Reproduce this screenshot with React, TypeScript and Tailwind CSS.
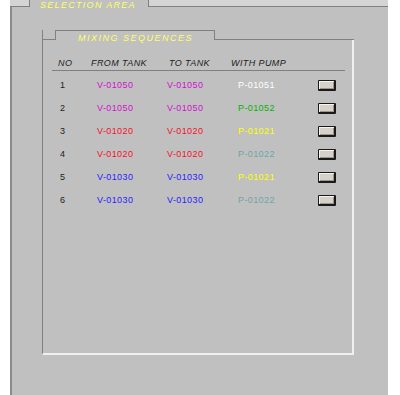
import React from "react";

const rows = [
  { no: "1", from: "V-01050", fromC: "text-[#d010d0]", to: "V-01050", toC: "text-[#d010d0]", pump: "P-01051", pumpC: "text-[#ffffff]" },
  { no: "2", from: "V-01050", fromC: "text-[#d010d0]", to: "V-01050", toC: "text-[#d010d0]", pump: "P-01052", pumpC: "text-[#00b400]" },
  { no: "3", from: "V-01020", fromC: "text-[#f4102c]", to: "V-01020", toC: "text-[#f4102c]", pump: "P-01021", pumpC: "text-[#ffff00]" },
  { no: "4", from: "V-01020", fromC: "text-[#f4102c]", to: "V-01020", toC: "text-[#f4102c]", pump: "P-01022", pumpC: "text-[#6ea6a6]" },
  { no: "5", from: "V-01030", fromC: "text-[#2a1cff]", to: "V-01030", toC: "text-[#2a1cff]", pump: "P-01021", pumpC: "text-[#ffff00]" },
  { no: "6", from: "V-01030", fromC: "text-[#2a1cff]", to: "V-01030", toC: "text-[#2a1cff]", pump: "P-01022", pumpC: "text-[#6ea6a6]" },
];

export default function App() {
  return (
    <div
      className="w-[400px] h-[395px] bg-white overflow-hidden"
      style={{ fontFamily: '"Liberation Sans", Arial, sans-serif' }}
    >
      <div className="ml-[10px] w-[378px] h-full bg-[#c0c0c0] flex flex-col">
        {/* top band with SELECTION AREA tab */}
        <div className="flex h-[7px] shrink-0">
          <div className="w-[19px] bg-[#d4d4d4] border-b border-[#808080]" />
          <div className="w-[120px] border-l border-r border-[#808080] bg-[#c0c0c0]">
            <div className="pl-[10px] pt-[1px] text-[9px] leading-[9px] italic tracking-[1.3px] text-[#ffff66] whitespace-nowrap">
              SELECTION AREA
            </div>
          </div>
          <div className="flex-1 bg-[#d4d4d4] border-b border-[#808080]" />
        </div>

        {/* outer frame body */}
        <div className="flex-1 border-l-2 border-[#8a8a8a] pl-[30px] pt-[23px]">
          <div className="w-[312px] flex flex-col">
            {/* inner tab row */}
            <div className="flex h-[10px]">
              <div className="w-[13px] border-l border-b border-[#808080]" />
              <div className="w-[160px] border-t border-l border-r border-[#808080]">
                <div className="pl-[22px] pt-[3px] text-[9px] leading-[9px] italic tracking-[1.5px] text-[#ffff66] whitespace-nowrap">
                  MIXING SEQUENCES
                </div>
              </div>
              <div className="flex-1 border-b border-[#808080]" />
            </div>
            {/* inner box */}
            <div className="h-[315px] border-l border-[#808080] border-r-2 border-r-[#f0f0f0] border-b-2 border-b-[#f0f0f0] pt-[19px]">
              <div className="ml-[9px] w-[293px]">
                <div className="flex text-[9px] leading-[9px] italic tracking-[0.4px] text-[#202020] whitespace-nowrap">
                  <span className="pl-[6px] w-[39px]">NO</span>
                  <span className="w-[78px]">FROM TANK</span>
                  <span className="w-[62px]">TO TANK</span>
                  <span>WITH PUMP</span>
                </div>
                <div className="mt-[2px] h-px bg-[#808080]" />
                <div className="mt-[3px] flex flex-col">
                  {rows.map((r) => (
                    <div
                      key={r.no}
                      className="flex items-center h-[23px] text-[9px] leading-[9px] tracking-[0.4px] whitespace-nowrap"
                    >
                      <span className="pl-[8px] w-[45px] text-[#202020]">{r.no}</span>
                      <span className={`w-[70px] ${r.fromC}`}>{r.from}</span>
                      <span className={`w-[71px] ${r.toC}`}>{r.to}</span>
                      <span className={`w-[80px] ${r.pumpC}`}>{r.pump}</span>
                      <div className="w-[18px] h-[11px] rounded-[1px] border border-[#1a1a1a] border-r-2 border-b-2 bg-[#d6d2ca] shadow-[inset_1px_1px_0_#f4f4f0,inset_-1px_-1px_0_#9a968e]" />
                    </div>
                  ))}
                </div>
              </div>
            </div>
          </div>
        </div>
      </div>
    </div>
  );
}
